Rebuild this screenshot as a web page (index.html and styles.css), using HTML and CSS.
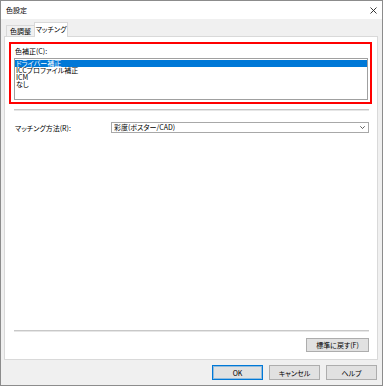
FILE: index.html
```html
<!DOCTYPE html>
<html lang="ja">
<head>
    <meta charset="UTF-8">
    <title>色設定</title>
    <link rel="stylesheet" href="styles.css">
</head>
<body>
    <div class="window">
        <div class="titlebar">
            <span class="title">色設定</span>
            <svg class="close" width="7" height="7" viewBox="0 0 7 7">
                <path d="M0.5 0.5 L6.5 6.5 M6.5 0.5 L0.5 6.5" stroke="#222" stroke-width="0.9" fill="none"/>
            </svg>
        </div>
        <div class="tabs">
            <div class="tab">色調整</div>
            <div class="tab active">マッチング</div>
        </div>
        <div class="panel">
            <div class="mark-box">
                <div class="label">色補正(C):</div>
                <ul class="listbox">
                    <li class="selected">ドライバー補正</li>
                    <li>ICCプロファイル補正</li>
                    <li>ICM</li>
                    <li>なし</li>
                </ul>
            </div>
            <div class="separator"></div>
            <div class="field-row">
                <span class="field-label">マッチング方法(R):</span>
                <div class="select">
                    <span>彩度(ポスター/CAD)</span>
                    <svg width="5" height="3" viewBox="0 0 5 3">
                        <path d="M0.3 0.3 L2.5 2.5 L4.7 0.3" stroke="#333" stroke-width="0.8" fill="none"/>
                    </svg>
                </div>
            </div>
            <div class="spacer"></div>
            <div class="separator"></div>
            <div class="panel-actions">
                <button class="btn reset">標準に戻す(F)</button>
            </div>
        </div>
        <div class="dialog-actions">
            <button class="btn default">OK</button>
            <button class="btn">キャンセル</button>
            <button class="btn">ヘルプ</button>
        </div>
    </div>
</body>
</html>
```

FILE: styles.css
```css
* {
    box-sizing: border-box;
}
body {
    margin: 0;
    padding: 0;
    background-color: #fff;
    font-family: "Noto Sans CJK JP", "Noto Sans", sans-serif;
    font-size: 7px;
    font-feature-settings: "palt";
    color: #000;
}
.window {
    width: 383px;
    height: 386px;
    border: 1px solid #8c8c8c;
    background-color: #f0f0f0;
    display: flex;
    flex-direction: column;
}
.titlebar {
    height: 18px;
    background-color: #fff;
    display: flex;
    align-items: center;
    justify-content: space-between;
    padding: 0 5px;
}
.title {
    line-height: 18px;
}
.tabs {
    height: 17px;
    display: flex;
    align-items: flex-end;
    margin-left: 5px;
}
.tab {
    height: 11px;
    line-height: 10px;
    width: 29px;
    text-align: center;
    border: 1px solid #d9d9d9;
    border-bottom: none;
    background-color: #f0f0f0;
}
.tab.active {
    width: 34px;
    height: 15px;
    line-height: 13px;
    margin-bottom: -1px;
    margin-left: -1px;
    background-color: #fff;
    position: relative;
    z-index: 1;
}
.panel {
    flex: 1;
    margin: 0 4px 0 3px;
    border: 1px solid #d9d9d9;
    background-color: #fff;
    display: flex;
    flex-direction: column;
}
.mark-box {
    margin: 5px 0 0 4px;
    width: 363px;
    height: 62px;
    border: 2px solid #f00;
    padding: 1px 1px 2px 3px;
}
.label {
    height: 12px;
    line-height: 12px;
    padding-left: 1px;
}
.listbox {
    list-style: none;
    margin: 1px 0 0 0;
    padding: 1px 0;
    width: 354px;
    height: 42px;
    border: 1px solid #a0a0a0;
}
.listbox li {
    height: 7px;
    line-height: 7px;
    padding-left: 1px;
    white-space: nowrap;
}
.listbox li.selected {
    background-color: #0078d7;
    color: #fff;
}
.separator {
    margin: 5px 8px 0 9px;
    height: 2px;
    border-top: 1px solid #c8c8c8;
    border-bottom: 1px solid #e6e6e6;
}
.field-row {
    display: flex;
    align-items: center;
    margin: 11px 8px 0 10px;
}
.field-label {
    width: 96px;
}
.select {
    flex: 1;
    height: 11px;
    border: 1px solid #a8a8a8;
    background-color: #fff;
    display: flex;
    align-items: center;
    justify-content: space-between;
    padding: 0 3px 0 2px;
    line-height: 9px;
}
.spacer {
    flex: 1;
}
.panel-actions {
    display: flex;
    justify-content: flex-end;
    margin: 6px 8px 7px 0;
}
.btn {
    font-family: inherit;
    font-size: 7px;
    font-feature-settings: "palt";
    color: #000;
    background-color: #e1e1e1;
    border: 1px solid #adadad;
    padding: 0;
    margin: 0;
    line-height: 12px;
}
.btn.reset {
    width: 63px;
    height: 14px;
}
.dialog-actions {
    height: 25px;
    display: flex;
    justify-content: flex-end;
    gap: 6px;
    padding: 5px 5px 0 0;
}
.dialog-actions .btn {
    width: 51px;
    height: 15px;
}
.btn.default {
    border-color: #0078d7;
    box-shadow: inset 0 0 0 1px rgba(0, 120, 215, 0.35);
}
```
